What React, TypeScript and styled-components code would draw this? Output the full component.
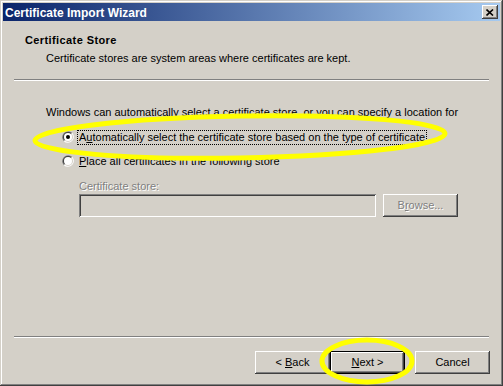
import React from 'react';
import styled, { createGlobalStyle } from 'styled-components';

const GlobalStyle = createGlobalStyle`
  html, body { margin: 0; padding: 0; background: #d4d0c8; }
  body { font-family: "Liberation Sans", Arial, sans-serif; font-size: 11px; }
`;

const Window = styled.div`
  position: relative;
  width: 503px;
  height: 386px;
  box-sizing: border-box;
  padding: 3px;
  background: #d4d0c8;
  box-shadow: inset -1px -1px #404040, inset 1px 1px #d4d0c8, inset -2px -2px #808080, inset 2px 2px #ffffff;
  display: flex;
  flex-direction: column;
  font-family: "Liberation Sans", Arial, sans-serif;
  font-size: 11px;
  line-height: 13px;
  color: #000;
`;

const TitleBar = styled.div`
  height: 18px;
  flex: none;
  display: flex;
  align-items: center;
  justify-content: space-between;
  padding: 0 2px;
  background: linear-gradient(to right, #0a246a, #a6caf0);
`;

const TitleText = styled.span`
  color: #fff;
  font-weight: bold;
  font-size: 12px;
  line-height: 14px;
  padding-top: 1px;
`;

const CloseButton = styled.div`
  width: 16px;
  height: 14px;
  background: #d4d0c8;
  box-shadow: inset -1px -1px #404040, inset 1px 1px #ffffff, inset -2px -2px #808080, inset 2px 2px #d4d0c8;
  display: flex;
  align-items: center;
  justify-content: center;
`;

const Header = styled.div`
  flex: none;
  padding: 13px 0 14px 22px;
  display: flex;
  flex-direction: column;
  gap: 5px;
`;

const HeaderTitle = styled.div`
  font-weight: bold;
  letter-spacing: 0.4px;
`;

const HeaderSub = styled.div`
  padding-left: 21px;
`;

const Separator = styled.div`
  flex: none;
  margin: 0 11px;
  border-top: 1px solid #808080;
  border-bottom: 1px solid #ffffff;
`;

const Body = styled.div`
  flex: 1;
  padding: 25px 0 0 43px;
  display: flex;
  flex-direction: column;
`;

const Intro = styled.div`
  height: 13px;
  white-space: nowrap;
`;

const RadioGroup = styled.div`
  margin: 12px 0 0 16px;
  display: flex;
  flex-direction: column;
  gap: 11px;
`;

const RadioRow = styled.label`
  display: flex;
  align-items: flex-start;
  gap: 4px;
  height: 13px;
  white-space: nowrap;
`;

const RadioLabel = styled.span<{ $focus?: boolean }>`
  padding: 0 1px;
  outline: ${p => (p.$focus ? '1px dotted #000' : 'none')};
  outline-offset: 0;
`;

const StoreSection = styled.div`
  margin: 12px 0 0 33px;
  display: flex;
  flex-direction: column;
  gap: 1px;
`;

const DisabledText = styled.div`
  color: #808080;
  text-shadow: 1px 1px #ffffff;
`;

const StoreRow = styled.div`
  display: flex;
  gap: 7px;
`;

const TextBox = styled.div`
  width: 297px;
  height: 23px;
  background: #d4d0c8;
  box-shadow: inset 1px 1px #808080, inset -1px -1px #ffffff, inset 2px 2px #404040, inset -2px -2px #d4d0c8;
`;

const Button = styled.button<{ $default?: boolean; $disabled?: boolean }>`
  width: 75px;
  height: 23px;
  padding: 0;
  margin: 0;
  font-family: "Liberation Sans", Arial, sans-serif;
  font-size: 11px;
  line-height: 13px;
  background: #d4d0c8;
  color: ${p => (p.$disabled ? '#808080' : '#000')};
  text-shadow: ${p => (p.$disabled ? '1px 1px #ffffff' : 'none')};
  border: ${p => (p.$default ? '1px solid #000' : 'none')};
  box-sizing: border-box;
  box-shadow: inset -1px -1px #404040, inset 1px 1px #ffffff, inset -2px -2px #808080, inset 2px 2px #d4d0c8;
  display: flex;
  align-items: center;
  justify-content: center;
  cursor: default;
  white-space: pre;
`;

const Footer = styled.div`
  flex: none;
  display: flex;
  justify-content: flex-end;
  padding: 13px 10px 9px 0;
`;

const Spacer = styled.div`
  width: 10px;
`;

const Overlay = styled.svg`
  position: absolute;
  left: 0;
  top: 0;
  width: 503px;
  height: 386px;
  pointer-events: none;
`;

const Radio: React.FC<{ checked?: boolean }> = ({ checked }) => (
  <svg width="12" height="12" viewBox="0 0 12 12" style={{ flex: 'none' }}>
    <path d="M1.76 10.24 A6 6 0 0 1 10.24 1.76 Z" fill="#808080" />
    <path d="M10.24 1.76 A6 6 0 0 1 1.76 10.24 Z" fill="#ffffff" />
    <path d="M2.46 9.54 A5 5 0 0 1 9.54 2.46 Z" fill="#404040" />
    <path d="M9.54 2.46 A5 5 0 0 1 2.46 9.54 Z" fill="#d4d0c8" />
    <circle cx="6" cy="6" r="4" fill="#ffffff" />
    {checked && <circle cx="6" cy="6" r="2" fill="#000" />}
  </svg>
);

export default function App() {
  return (
    <>
      <GlobalStyle />
      <Window>
        <TitleBar>
          <TitleText>Certificate Import Wizard</TitleText>
          <CloseButton>
            <svg width="8" height="7" viewBox="0 0 8 7">
              <path d="M0.5 0.5 L7 6.5 M7 0.5 L0.5 6.5" stroke="#000" strokeWidth="1.6" />
            </svg>
          </CloseButton>
        </TitleBar>
        <Header>
          <HeaderTitle>Certificate Store</HeaderTitle>
          <HeaderSub>Certificate stores are system areas where certificates are kept.</HeaderSub>
        </Header>
        <Separator />
        <Body>
          <Intro>Windows can automatically select a certificate store, or you can specify a location for</Intro>
          <RadioGroup>
            <RadioRow>
              <Radio checked />
              <RadioLabel $focus>
                A<u>u</u>tomatically select the certificate store based on the type of certificate
              </RadioLabel>
            </RadioRow>
            <RadioRow>
              <Radio />
              <RadioLabel>
                <u>P</u>lace all certificates in the following store
              </RadioLabel>
            </RadioRow>
          </RadioGroup>
          <StoreSection>
            <DisabledText>Certificate store:</DisabledText>
            <StoreRow>
              <TextBox />
              <Button $disabled>
                <span>
                  B<u>r</u>owse...
                </span>
              </Button>
            </StoreRow>
          </StoreSection>
        </Body>
        <Separator />
        <Footer>
          <Button>
            <span>
              &lt; <u>B</u>ack
            </span>
          </Button>
          <Button $default>
            <span>
              <u>N</u>ext &gt;
            </span>
          </Button>
          <Spacer />
          <Button>
            <span>Cancel</span>
          </Button>
        </Footer>
        <Overlay viewBox="0 0 503 386">
          <ellipse cx="240" cy="137" rx="205" ry="21" fill="none" stroke="#ffff00" strokeWidth="5" transform="rotate(-1 240 137)" />
          <ellipse cx="367" cy="361" rx="45" ry="21" fill="none" stroke="#ffff00" strokeWidth="5" />
        </Overlay>
      </Window>
    </>
  );
}
